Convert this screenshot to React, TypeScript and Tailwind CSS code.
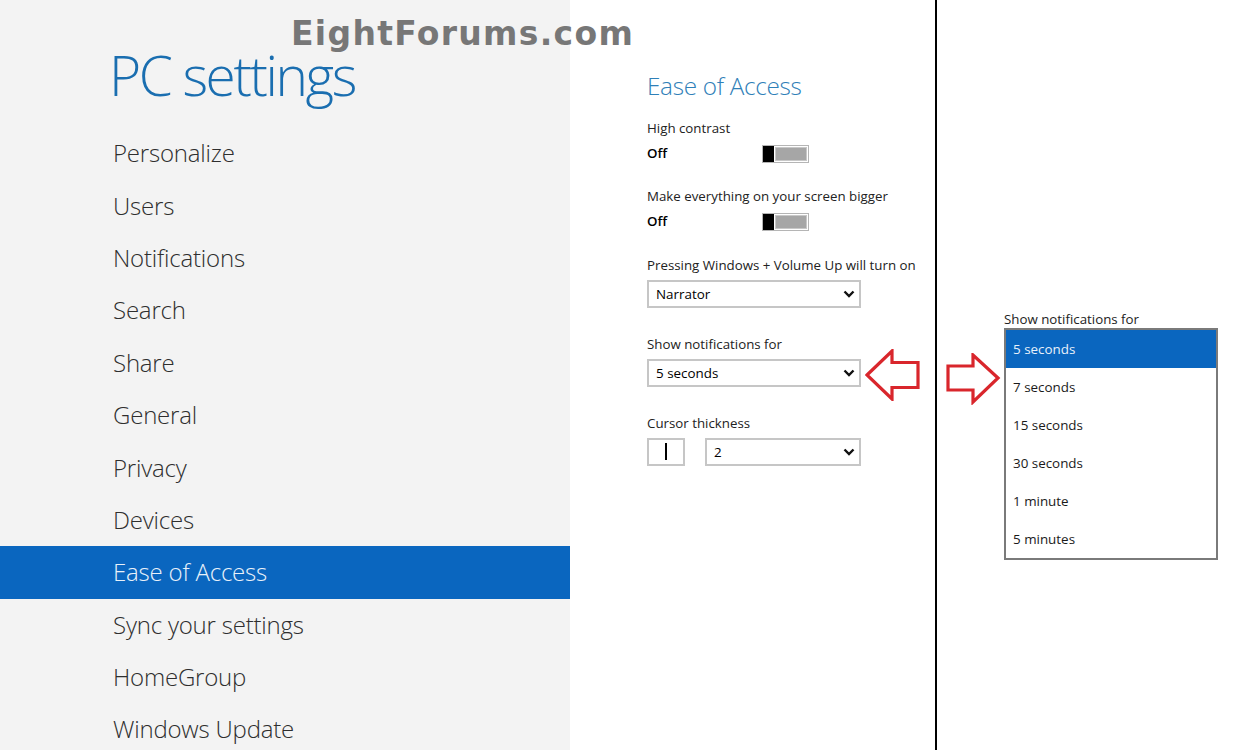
import { ReactNode } from "react";

const navItems = [
  "Personalize",
  "Users",
  "Notifications",
  "Search",
  "Share",
  "General",
  "Privacy",
  "Devices",
  "Ease of Access",
  "Sync your settings",
  "HomeGroup",
  "Windows Update",
];

const durations = ["5 seconds", "7 seconds", "15 seconds", "30 seconds", "1 minute", "5 minutes"];

function Chevron() {
  return (
    <svg width="12" height="8" viewBox="0 0 12 8" className="shrink-0">
      <path d="M1.5 1.5 L6 6 L10.5 1.5" fill="none" stroke="#111" strokeWidth="2.4" />
    </svg>
  );
}

function Toggle() {
  return (
    <div className="flex h-[18px] w-[47px] border border-[#b5b5b5] bg-white">
      <div className="w-[11px] bg-black" />
      <div className="m-[1px] flex-1 border border-[#c8c8c8] bg-[#a6a6a6]" />
    </div>
  );
}

function Select({ value, className }: { value: string; className?: string }) {
  return (
    <div className={"flex h-[28px] items-center justify-between border-2 border-[#c6c6c6] pl-[7px] pr-[4px] text-[13.4px] text-black " + (className ?? "")}>
      <span>{value}</span>
      <Chevron />
    </div>
  );
}

function Field({ label, children }: { label: string; children: ReactNode }) {
  return (
    <div>
      <div className="text-[13.3px] leading-[20px] text-[#222]">{label}</div>
      <div className="mt-[5px]">{children}</div>
    </div>
  );
}

function Arrow({ dir }: { dir: "left" | "right" }) {
  const d =
    dir === "left"
      ? "M2 26 L27 2 L27 13.5 L53 13.5 L53 38.5 L27 38.5 L27 50 Z"
      : "M52 25 L27 2 L27 13 L2 13 L2 37 L27 37 L27 49 Z";
  return (
    <svg width="55" height="52" viewBox="0 0 55 52">
      <path d={d} fill="#fff" stroke="#d9262c" strokeWidth="3.2" strokeLinejoin="miter" />
    </svg>
  );
}

export default function App() {
  return (
    <div className="relative flex h-[750px] w-[1238px] overflow-hidden bg-white" style={{ fontFamily: '"Open Sans", "Noto Sans", sans-serif' }}>
      {/* left nav */}
      <div className="w-[570px] shrink-0 bg-[#f3f3f3] pt-[40px]">
        <h1 className="pl-[109px] text-[55px] font-light leading-[70px] tracking-[-2.4px] text-[#1a6eb0]">PC settings</h1>
        <ul className="mt-[17px]">
          {navItems.map((item) => {
            const active = item === "Ease of Access";
            return (
              <li
                key={item}
                className={
                  "flex h-[52.4px] items-center pl-[113px] text-[24px] font-light tracking-[-0.2px] " +
                  (active ? "bg-[#0a66bf] text-[#e8f1fa]" : "text-[#2e2e2e]")
                }
              >
                {item}
              </li>
            );
          })}
        </ul>
      </div>

      {/* settings pane */}
      <div className="w-[365px] shrink-0 pl-[77px] pt-[70px]">
        <h2 className="text-[24.3px] font-light leading-[32px] tracking-[-0.3px] text-[#2f80b8]">Ease of Access</h2>
        <div className="mt-[16px] flex flex-col">
          <div>
            <div className="text-[13.3px] leading-[20px] text-[#222]">High contrast</div>
            <div className="mt-[6px] flex items-center">
              <span className="w-[115px] text-[13.3px] font-semibold text-black">Off</span>
              <Toggle />
            </div>
          </div>
          <div className="mt-[22px]">
            <div className="text-[13.3px] leading-[20px] text-[#222]">Make everything on your screen bigger</div>
            <div className="mt-[6px] flex items-center">
              <span className="w-[115px] text-[13.3px] font-semibold text-black">Off</span>
              <Toggle />
            </div>
          </div>
          <div className="mt-[23px]">
            <Field label="Pressing Windows + Volume Up will turn on">
              <Select value="Narrator" className="w-[214px]" />
            </Field>
          </div>
          <div className="mt-[26px] flex items-end">
            <Field label="Show notifications for">
              <Select value="5 seconds" className="w-[214px]" />
            </Field>
            <div className="-mb-[14px] ml-[4px]">
              <Arrow dir="left" />
            </div>
          </div>
          <div className="mt-[26px]">
            <Field label="Cursor thickness">
              <div className="flex gap-[20px]">
                <div className="flex h-[28px] w-[38px] items-center justify-center border-2 border-[#c6c6c6]">
                  <div className="h-[17px] w-[2px] bg-black" />
                </div>
                <Select value="2" className="w-[156px]" />
              </div>
            </Field>
          </div>
        </div>
      </div>

      {/* divider */}
      <div className="w-[2px] shrink-0 bg-black" />

      {/* expanded dropdown */}
      <div className="flex flex-1 items-start pl-[9px] pt-[310px]">
        <div className="mt-[43px]">
          <Arrow dir="right" />
        </div>
        <div className="ml-[3px]">
          <div className="text-[13.3px] leading-[18px] text-[#222]">Show notifications for</div>
          <ul className="w-[214px] border-2 border-[#7a7a7a] bg-white">
            {durations.map((d, i) => (
              <li
                key={d}
                className={
                  "flex h-[38px] items-center pl-[7px] text-[13.4px] " +
                  (i === 0 ? "bg-[#0a66bf] text-[#e8f1fa]" : "text-[#1a1a1a]")
                }
              >
                {d}
              </li>
            ))}
          </ul>
        </div>
      </div>

      {/* watermark */}
      <div
        className="absolute left-[291px] top-[9px] text-[33px] font-bold tracking-[1.3px] text-[#777]"
        style={{ fontFamily: '"DejaVu Sans", Verdana, sans-serif' }}
      >
        EightForums.com
      </div>
    </div>
  );
}
